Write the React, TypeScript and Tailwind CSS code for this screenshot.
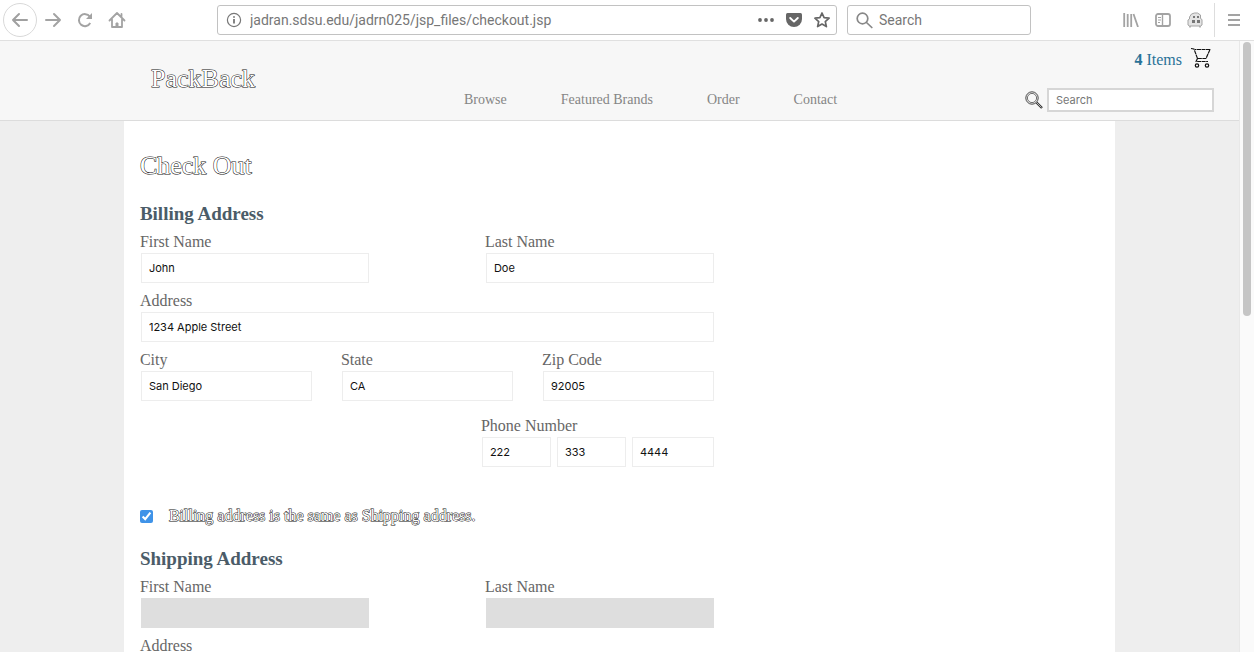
import type { ReactNode } from "react";

const serif = "font-['Liberation_Serif',serif]";
const sans = "font-['Inter',sans-serif]";
const outlined = "text-white [-webkit-text-stroke:1px_#111] [paint-order:stroke_fill]";

function ToolButton({ label, children }: { label: string; children: ReactNode }) {
  return (
    <button type="button" aria-label={label} className="flex size-5 shrink-0 items-center justify-center text-[#a3a3a3]">
      {children}
    </button>
  );
}

function BrowserBar() {
  return (
    <div className={`flex h-[41px] shrink-0 items-center border-b border-[#e0e0e0] bg-white ${sans}`}>
      <div className="flex w-[217px] shrink-0 items-center gap-1.5 pl-[3px]">
        <button type="button" aria-label="Back" className="flex size-[34px] items-center justify-center rounded-full border border-[#d9d9d9] text-[#a0a0a0]">
          <svg width="18" height="18" viewBox="0 0 18 18" fill="none" stroke="currentColor" strokeWidth="2" strokeLinecap="round" strokeLinejoin="round">
            <path d="M16 9H2M8 3L2 9l6 6" />
          </svg>
        </button>
        <div className="flex items-center gap-3">
          <ToolButton label="Forward">
            <svg width="18" height="18" viewBox="0 0 18 18" fill="none" stroke="currentColor" strokeWidth="2" strokeLinecap="round" strokeLinejoin="round">
              <path d="M2 9h14M10 3l6 6-6 6" />
            </svg>
          </ToolButton>
          <ToolButton label="Reload">
            <svg width="18" height="18" viewBox="0 0 18 18" fill="none" stroke="currentColor" strokeWidth="2">
              <path d="M14.2 12a6 6 0 1 1-.4-6.400" />
              <path d="M16 2v6h-6z" fill="currentColor" stroke="none" />
            </svg>
          </ToolButton>
          <ToolButton label="Home">
            <svg width="18" height="18" viewBox="0 0 18 18" fill="none" stroke="currentColor" strokeWidth="1.800" strokeLinecap="round" strokeLinejoin="round">
              <path d="M1.500 9.500L9 2l7.500 7.500M4 8.500V16h10V8.500M13.500 5.500V3" />
              <path d="M8 16v-4h2v4z" fill="currentColor" strokeWidth="1" />
            </svg>
          </ToolButton>
        </div>
      </div>

      <div className="flex h-[30px] min-w-0 flex-1 items-center rounded-[3px] border border-[#c2c2c2] bg-white pr-1 pl-2">
        <svg className="shrink-0" width="16" height="16" viewBox="0 0 16 16" fill="none" stroke="#777" strokeWidth="1.200">
          <circle cx="8" cy="8" r="6.600" />
          <path d="M8 7v4.500M8 4.200v1.600" strokeWidth="1.800" />
        </svg>
        <input
          aria-label="Address bar"
          defaultValue="jadran.sdsu.edu/jadrn025/jsp_files/checkout.jsp"
          className="min-w-0 flex-1 bg-transparent pl-2 text-sm text-[#777] outline-none font-['Roboto',sans-serif]"
        />
        <div className="flex shrink-0 items-center gap-2 text-[#666]">
          <button type="button" aria-label="Page actions" className="flex size-5 items-center justify-center">
            <svg width="16" height="4" viewBox="0 0 16 4" fill="currentColor">
              <circle cx="2" cy="2" r="1.900" />
              <circle cx="8" cy="2" r="1.900" />
              <circle cx="14" cy="2" r="1.900" />
            </svg>
          </button>
          <button type="button" aria-label="Save to Pocket" className="flex size-5 items-center justify-center">
            <svg width="16" height="14" viewBox="0 0 16 14">
              <path d="M1.500 0h13Q16 0 16 1.500V6a8 8 0 0 1-16 0V1.500Q0 0 1.500 0z" fill="currentColor" />
              <path d="M4.200 5L8 8.600 11.800 5" fill="none" stroke="#fff" strokeWidth="1.900" strokeLinecap="round" strokeLinejoin="round" />
            </svg>
          </button>
          <button type="button" aria-label="Bookmark" className="flex size-5 items-center justify-center">
            <svg width="18" height="18" viewBox="0 0 18 18" fill="none" stroke="currentColor" strokeWidth="1.700" strokeLinejoin="round">
              <path d="M9 2l2.100 4.700 5 .5-3.800 3.400 1.100 5L9 13l-4.400 2.600 1.100-5L1.900 7.200l5-.5z" />
            </svg>
          </button>
        </div>
      </div>

      <label className="ml-[10px] flex h-[30px] w-[184px] shrink-0 items-center rounded-[3px] border border-[#c2c2c2] pl-2">
        <svg width="17" height="17" viewBox="0 0 17 17" fill="none" stroke="#888" strokeWidth="1.700" strokeLinecap="round">
          <circle cx="6.500" cy="6.500" r="5.300" />
          <path d="M10.500 10.500l5.300 5" />
        </svg>
        <input aria-label="Search the web" placeholder="Search" className="ml-1.5 w-0 flex-1 bg-transparent text-sm outline-none placeholder:text-[#777] font-['Roboto',sans-serif]" />
      </label>

      <div className="ml-[90px] flex h-full shrink-0 items-center gap-[9px] pr-[10px]">
        <div className="flex items-center gap-3">
          <ToolButton label="Library">
            <svg width="16" height="14" viewBox="0 0 16 14" fill="none" stroke="currentColor" strokeWidth="1.800">
              <path d="M1.200 0v14M4.700 1v13M8.200 1v13M10.500 1l4.500 13" />
            </svg>
          </ToolButton>
          <ToolButton label="Sidebars">
            <svg width="16" height="14" viewBox="0 0 16 14" fill="none" stroke="currentColor">
              <rect x="1" y="1" width="14" height="12" rx="2" strokeWidth="1.800" />
              <path d="M7.500 1v12" strokeWidth="1.400" />
              <path d="M3 4.500h3M3 7h3M3 9.500h2" />
            </svg>
          </ToolButton>
          <ToolButton label="Extension">
            <svg width="16" height="16" viewBox="0 0 16 16" fill="none" stroke="currentColor">
              <path d="M2.500 5L4.500 2l3-1h3l3 2v3.500l1.500 1V13l-1.500 1h-11L1 13V8l1.500-1z" fill="#e4e4e4" strokeWidth="1" />
              <path d="M3 14v1.500M13 14v1.500" strokeWidth="1.500" />
              <g fill="#777" stroke="none">
                <rect x="6" y="4" width="2" height="2" />
                <rect x="10" y="4" width="2" height="2" />
                <rect x="5" y="8" width="3" height="3" />
                <rect x="10" y="8" width="3" height="3" />
              </g>
            </svg>
          </ToolButton>
        </div>
        <div className="flex h-[34px] items-center border-l border-[#ddd] pl-[9px]">
          <ToolButton label="Open menu">
            <svg width="12" height="12" viewBox="0 0 12 12" stroke="currentColor" strokeWidth="2">
              <path d="M0 1h12M0 6h12M0 11h12" />
            </svg>
          </ToolButton>
        </div>
      </div>
    </div>
  );
}

function SiteHeader() {
  return (
    <header className="flex h-20 shrink-0 items-start justify-between border-b border-[#dcdcdc] bg-[#f7f7f7]">
      <a href="#home" className={`w-[313px] shrink-0 pt-[22px] pl-[151px] text-[26px] leading-8 ${outlined}`}>
        PackBack
      </a>
      <nav className="flex min-w-0 flex-1 gap-[54px] pt-[49px] pl-[151px] text-sm leading-5 whitespace-nowrap text-[#858585]">
        <a href="#browse">Browse</a>
        <a href="#brands">Featured Brands</a>
        <a href="#order">Order</a>
        <a href="#contact">Contact</a>
      </nav>
      <div className="flex shrink-0 flex-col items-end pt-[7px] pr-[25px]">
        <a href="#cart" className="flex h-6 items-center gap-2 text-base text-[#2a7297]">
          <span>
            <b>4</b> Items
          </span>
          <svg className="mr-[2px] mb-1" width="22" height="22" viewBox="0 0 22 22" fill="none" stroke="#111" strokeWidth="1.200" strokeLinejoin="round">
            <path d="M1 1.500l3 .5L7.500 11.500h8.500l4-9H5M7.500 11.500L6 14.500H18" strokeDasharray="4 .5" />
            <circle cx="7" cy="18.500" r="1.700" />
            <circle cx="17" cy="18.500" r="1.700" />
          </svg>
        </a>
        <label className="mt-4 flex items-center gap-1">
          <svg width="18" height="18" viewBox="0 0 18 18" fill="none" stroke="#333">
            <circle cx="7" cy="7" r="6.200" strokeWidth=".9" />
            <circle cx="7" cy="7" r="4.600" strokeWidth=".7" />
            <path d="M11.500 11.500l5.500 5.500" strokeWidth="2.400" />
            <path d="M11.500 11.500l5 5" stroke="#eee" strokeWidth=".7" />
          </svg>
          <input
            aria-label="Search products"
            placeholder="Search"
            className={`h-6 w-[167px] border-2 border-[#d6d6d6] bg-white px-[7px] text-[11px] outline-none placeholder:text-[#777] ${sans}`}
          />
        </label>
      </div>
    </header>
  );
}

interface FieldProps {
  id: string;
  label: string;
  value?: string;
  disabled?: boolean;
  className?: string;
}

const inputStyle = `h-[30px] w-full border border-[#ededed] bg-white px-[7px] text-[11px] text-[#111] outline-none disabled:border-[#dedede] disabled:bg-[#dedede] ${sans}`;

function Field({ id, label, value, disabled, className = "" }: FieldProps) {
  return (
    <div className={className}>
      <label htmlFor={id} className="-ml-px block h-[23px] text-base leading-6">
        {label}
      </label>
      <input id={id} defaultValue={value} disabled={disabled} className={inputStyle} />
    </div>
  );
}

function BillingFields() {
  return (
    <>
      <div className="grid grid-cols-3 gap-x-[30px]">
        <Field id="billing-city" label="City" value="San Diego" />
        <Field id="billing-state" label="State" value="CA" />
        <Field id="billing-zip" label="Zip Code" value="92005" />
      </div>
      <fieldset className="mt-[7px] w-[232px] self-end">
        <legend className="-ml-px h-[23px] text-base leading-6">Phone Number</legend>
        <div className="flex gap-[6px]">
          <div className="w-[69px]">
            <input aria-label="Area code" defaultValue="222" className={inputStyle} />
          </div>
          <div className="w-[69px]">
            <input aria-label="Prefix" defaultValue="333" className={inputStyle} />
          </div>
          <div className="flex-1">
            <input aria-label="Line number" defaultValue="4444" className={inputStyle} />
          </div>
        </div>
      </fieldset>
    </>
  );
}

interface AddressProps {
  prefix: string;
  title: string;
  first?: string;
  last?: string;
  address?: string;
  disabled?: boolean;
  children?: ReactNode;
}

function AddressSection({ prefix, title, first, last, address, disabled, children }: AddressProps) {
  return (
    <section>
      <h2 className="text-[19px] leading-6 font-bold text-[#4b5c68]">{title}</h2>
      <div className="mt-1 flex max-w-[574px] flex-col gap-[6px] pl-px">
        <div className="flex gap-[117px]">
          <Field className="min-w-0 flex-1" id={`${prefix}-first`} label="First Name" value={first} disabled={disabled} />
          <Field className="min-w-0 flex-1" id={`${prefix}-last`} label="Last Name" value={last} disabled={disabled} />
        </div>
        <Field id={`${prefix}-address`} label="Address" value={address} disabled={disabled} />
        {children}
      </div>
    </section>
  );
}

export default function App() {
  return (
    <div className={`flex h-screen flex-col overflow-hidden bg-white ${serif}`}>
      <BrowserBar />
      <div className="flex min-h-0 flex-1">
        <div className="flex min-w-0 flex-1 flex-col">
          <SiteHeader />
          <div className="min-h-0 flex-1 overflow-hidden bg-[#eee]">
            <main className="mx-auto min-h-full w-4/5 bg-white px-4 pt-[29px] text-[#666]">
              <h1 className={`mb-5 text-[26px] leading-8 ${outlined}`}>Check Out</h1>
              <AddressSection prefix="billing" title="Billing Address" first="John" last="Doe" address="1234 Apple Street">
                <BillingFields />
              </AddressSection>
              <div className="mt-[37px] mb-[19px] flex h-6 items-center gap-4">
                <input id="same" type="checkbox" defaultChecked className="size-[13px] accent-[#3f93e8]" />
                <label htmlFor="same" className={`text-base leading-6 ${outlined}`}>
                  Billing address is the same as Shipping address.
                </label>
              </div>
              <AddressSection prefix="shipping" title="Shipping Address" disabled />
            </main>
          </div>
        </div>
        <div className="flex w-[15px] shrink-0 justify-center border-l border-[#e8e8e8] bg-[#fafafa] pt-px">
          <div className="h-[274px] w-2 rounded-full bg-[#c5c5c5]" />
        </div>
      </div>
    </div>
  );
}
